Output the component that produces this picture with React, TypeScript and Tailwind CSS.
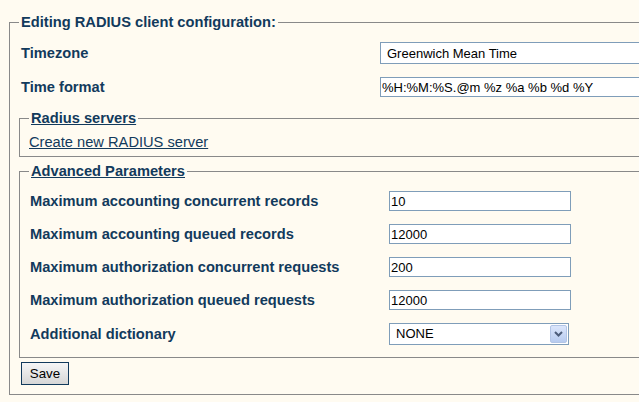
import React from "react";

const labelCls = "text-[11pt] font-bold leading-[17px]";
const inputCls =
  "border border-[#7f9db9] bg-white text-[13px] text-black outline-none leading-[16px]";

function Row({
  label,
  children,
  h,
}: {
  label: string;
  children: React.ReactNode;
  h: string;
}) {
  return (
    <>
      <div className={`${labelCls} ${h} flex items-center pl-[1px]`}>{label}</div>
      <div className={`${h} flex items-center`}>{children}</div>
    </>
  );
}

export default function App() {
  return (
    <div className="w-[639px] h-[402px] overflow-hidden bg-[#fffbf1] font-['Liberation_Sans',Arial,sans-serif] text-[#123a5c]">
      <fieldset className="ml-[9px] mt-[14px] w-[700px] border border-[#898989] pl-[9px] pr-[12px] pb-[9px]">
        <legend className={`${labelCls} px-[2px]`}>Editing RADIUS client configuration:</legend>

        <div className="mt-[11px] grid grid-cols-[361px_1fr] gap-y-[13px]">
          <div className={`${labelCls} h-[22px] flex items-center pl-[2px]`}>Timezone</div>
          <div className="h-[22px] flex items-center">
            <input
              readOnly
              defaultValue="Greenwich Mean Time"
              className={`${inputCls} w-[300px] h-[22px] pl-[6px]`}
            />
          </div>
          <div className={`${labelCls} h-[20px] flex items-center pl-[2px]`}>Time format</div>
          <div className="h-[20px] flex items-center">
            <input
              readOnly
              defaultValue="%H:%M:%S.@m %z %a %b %d %Y"
              className={`${inputCls} w-[300px] h-[20px] pl-[1px]`}
            />
          </div>
        </div>

        <fieldset className="mt-[13px] border border-[#898989] pl-[9px] pb-[5px]">
          <legend className={`${labelCls} px-[2px]`}>
            <span className="underline">Radius servers</span>
          </legend>
          <a href="#" className="mt-[7px] block text-[11pt] leading-[17px] underline text-[#123a5c]">
            Create new RADIUS server
          </a>
        </fieldset>

        <fieldset className="mt-[6px] border border-[#898989] pl-[9px] pb-[12px]">
          <legend className={`${labelCls} px-[2px]`}>
            <span className="underline">Advanced Parameters</span>
          </legend>
          <div className="mt-[11px] grid grid-cols-[360px_1fr] gap-y-[13px]">
            <Row label="Maximum accounting concurrent records" h="h-[20px]">
              <input readOnly defaultValue="10" className={`${inputCls} w-[182px] h-[20px] pl-[1px]`} />
            </Row>
            <Row label="Maximum accounting queued records" h="h-[20px]">
              <input readOnly defaultValue="12000" className={`${inputCls} w-[182px] h-[20px] pl-[1px]`} />
            </Row>
            <Row label="Maximum authorization concurrent requests" h="h-[20px]">
              <input readOnly defaultValue="200" className={`${inputCls} w-[182px] h-[20px] pl-[1px]`} />
            </Row>
            <Row label="Maximum authorization queued requests" h="h-[20px]">
              <input readOnly defaultValue="12000" className={`${inputCls} w-[182px] h-[20px] pl-[1px]`} />
            </Row>
            <Row label="Additional dictionary" h="h-[22px]">
              <div className="w-[180px] h-[22px] border border-[#7f9db9] bg-white flex items-center justify-between">
                <span className="pl-[6px] text-[13px] text-black leading-[16px]">NONE</span>
                <span className="mr-[1px] w-[17px] h-[18px] rounded-[2px] border border-[#b3c5e6] bg-gradient-to-b from-[#dce6fb] to-[#b7cbef] flex items-center justify-center">
                  <svg width="9" height="6" viewBox="0 0 9 6">
                    <polyline points="1,1 4.5,4.5 8,1" fill="none" stroke="#4d5d7a" strokeWidth="2" />
                  </svg>
                </span>
              </div>
            </Row>
          </div>
        </fieldset>

        <button className="mt-[4px] ml-[2px] w-[48px] h-[23px] border border-[#123a5c] bg-gradient-to-b from-[#f6f6f6] to-[#d6d6d6] text-[10pt] text-black leading-[16px]">
          Save
        </button>
      </fieldset>
    </div>
  );
}
